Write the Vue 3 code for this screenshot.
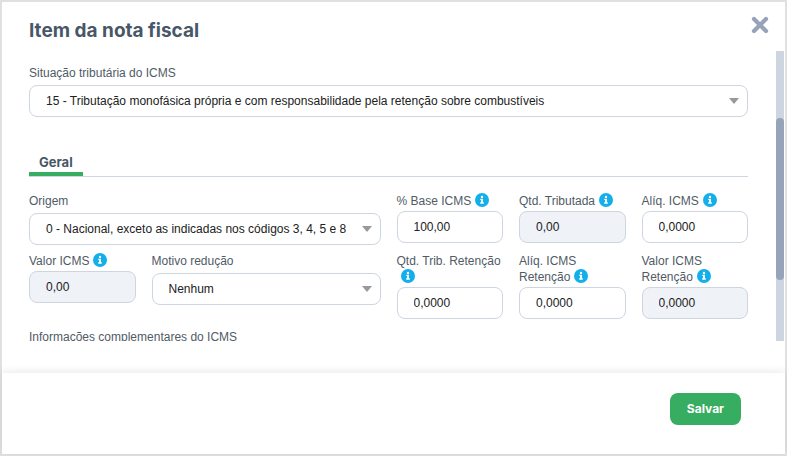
<script setup>
import { ref } from 'vue'

const situacao = ref('15 - Tributação monofásica própria e com responsabilidade pela retenção sobre combustíveis')

const fields = ref([
  { id: 'origem', label: ['Origem'], type: 'select', span: 3, value: '0 - Nacional, exceto as indicadas nos códigos 3, 4, 5 e 8' },
  { id: 'base', label: ['% Base ICMS'], info: true, span: 1, value: '100,00' },
  { id: 'qtd', label: ['Qtd. Tributada'], info: true, span: 1, value: '0,00', locked: true },
  { id: 'aliq', label: ['Alíq. ICMS'], info: true, span: 1, value: '0,0000' },
  { id: 'valor', label: ['Valor ICMS'], info: true, span: 1, value: '0,00', locked: true },
  { id: 'motivo', label: ['Motivo redução'], type: 'select', span: 2, value: 'Nenhum' },
  { id: 'qtdret', label: ['Qtd. Trib. Retenção', ''], info: true, span: 1, value: '0,0000' },
  { id: 'aliqret', label: ['Alíq. ICMS', 'Retenção'], info: true, span: 1, value: '0,0000' },
  { id: 'valorret', label: ['Valor ICMS', 'Retenção'], info: true, span: 1, value: '0,0000', locked: true },
])
</script>

<template>
  <main class="modal">
    <header class="head">
      <h1>Item da nota fiscal</h1>
      <button class="close" type="button" aria-label="Fechar">
        <svg viewBox="0 0 18 18" width="18" height="18" aria-hidden="true">
          <path d="M3 3L15 15M15 3L3 15" fill="none" stroke="#97a3b9" stroke-width="4.2" stroke-linecap="round" />
        </svg>
      </button>
    </header>

    <div class="middle">
      <div class="content">
        <div class="field">
          <label class="label" for="situacao">Situação tributária do ICMS</label>
          <div class="select-wrap">
            <select id="situacao" v-model="situacao" class="control">
              <option>{{ situacao }}</option>
            </select>
            <svg class="arrow" viewBox="0 0 10 6" width="10" height="6" aria-hidden="true"><path d="M0 0H10L5 6Z" fill="#999" /></svg>
          </div>
        </div>

        <nav class="tabs">
          <a class="tab" href="#geral">Geral</a>
        </nav>

        <div id="geral" class="grid">
          <div v-for="f in fields" :key="f.id" class="field" :class="'span-' + f.span">
            <label class="label" :for="f.id">
              <span v-for="(line, i) in f.label" :key="i" class="line">{{ line }}<svg
                v-if="f.info && i === f.label.length - 1"
                class="info"
                viewBox="0 0 14 14"
                width="14"
                height="14"
                aria-hidden="true"
              ><circle cx="7" cy="7" r="7" fill="#12afeb" /><circle cx="7" cy="3.9" r="1.2" fill="#fff" /><path d="M5.3 5.8H8V9.3H8.8V10.7H5.2V9.3H6V7.1H5.3Z" fill="#fff" /></svg></span>
            </label>
            <div v-if="f.type === 'select'" class="select-wrap">
              <select :id="f.id" v-model="f.value" class="control">
                <option>{{ f.value }}</option>
              </select>
              <svg class="arrow" viewBox="0 0 10 6" width="10" height="6" aria-hidden="true"><path d="M0 0H10L5 6Z" fill="#999" /></svg>
            </div>
            <input v-else :id="f.id" v-model="f.value" class="control text" type="text" :readonly="f.locked" :class="{ locked: f.locked }">
          </div>
        </div>

        <p class="label more">Informações complementares do ICMS</p>
      </div>
      <div class="track"><div class="thumb"></div></div>
    </div>

    <footer class="foot">
      <button class="save" type="button">Salvar</button>
    </footer>
  </main>
</template>

<style>
body {
  background: #fff;
}
</style>

<style scoped>
.modal {
  box-sizing: border-box;
  display: flex;
  flex-direction: column;
  height: 100vh;
  border: 2px solid #e0e0e0;
  background: #fff;
  color: #485768;
  font-family: "Liberation Sans", Arial, sans-serif;
  font-size: 12px;
  line-height: 16px;
}
.head {
  display: flex;
  justify-content: space-between;
  align-items: flex-start;
  padding: 14px 16px 5px 27px;
}
h1 {
  margin: 0;
  font: 700 19px/30px Inter, sans-serif;
}
.close {
  display: flex;
  margin: 0;
  padding: 0;
  border: 0;
  background: none;
}
.middle {
  flex: 1;
  display: flex;
  min-height: 0;
  margin-bottom: 32px;
  padding-right: 1px;
  overflow: hidden;
}
.content {
  flex: 1;
  min-width: 0;
  padding: 14px 28px 0 27px;
}
.track {
  width: 8px;
  padding-top: 67px;
  box-sizing: border-box;
  background: #cdd5e1;
}
.thumb {
  height: 162px;
  border-radius: 4px;
  background: #97a3b9;
}
.label {
  display: block;
  margin: 0;
  color: #505b66;
}
.line {
  display: block;
  height: 16px;
  white-space: nowrap;
}
.info {
  margin-left: 4px;
  vertical-align: -2px;
}
.select-wrap {
  position: relative;
  margin-top: 4px;
}
.arrow {
  position: absolute;
  right: 9px;
  top: 13px;
  pointer-events: none;
}
.control {
  display: block;
  box-sizing: border-box;
  width: 100%;
  height: 32px;
  margin: 0;
  padding: 0 24px 0 16px;
  border: 1px solid #cdd5e1;
  border-radius: 8px;
  outline: 0;
  appearance: none;
  background: #fff;
  color: #212121;
  font: 12px/16px "Liberation Sans", Arial, sans-serif;
}
.control.text {
  margin-top: 2px;
  padding: 0 8px 0 16px;
}
.control.locked {
  background: #eff2f7;
}
.tabs {
  display: flex;
  margin-top: 36px;
  border-bottom: 1px solid #cdd5e1;
}
.tab {
  padding: 0 10px;
  border-bottom: 4px solid #36ad60;
  color: #485768;
  font: 700 13px/19px Inter, sans-serif;
  text-decoration: none;
}
.grid {
  display: grid;
  grid-template-columns: repeat(6, minmax(0, 1fr));
  gap: 8px 16px;
  margin-top: 16px;
}
.span-2 {
  grid-column: span 2;
}
.span-3 {
  grid-column: span 3;
}
.more {
  margin-top: 10px;
}
.foot {
  display: flex;
  justify-content: flex-end;
  padding: 20px 44px 29px;
  box-shadow: 0 -2px 8px rgba(0, 0, 0, 0.08);
}
.save {
  height: 32px;
  padding: 0 17px;
  border: 0;
  border-radius: 8px;
  background: #36ad60;
  color: #fff;
  font: 700 12px/16px Inter, sans-serif;
}
</style>
